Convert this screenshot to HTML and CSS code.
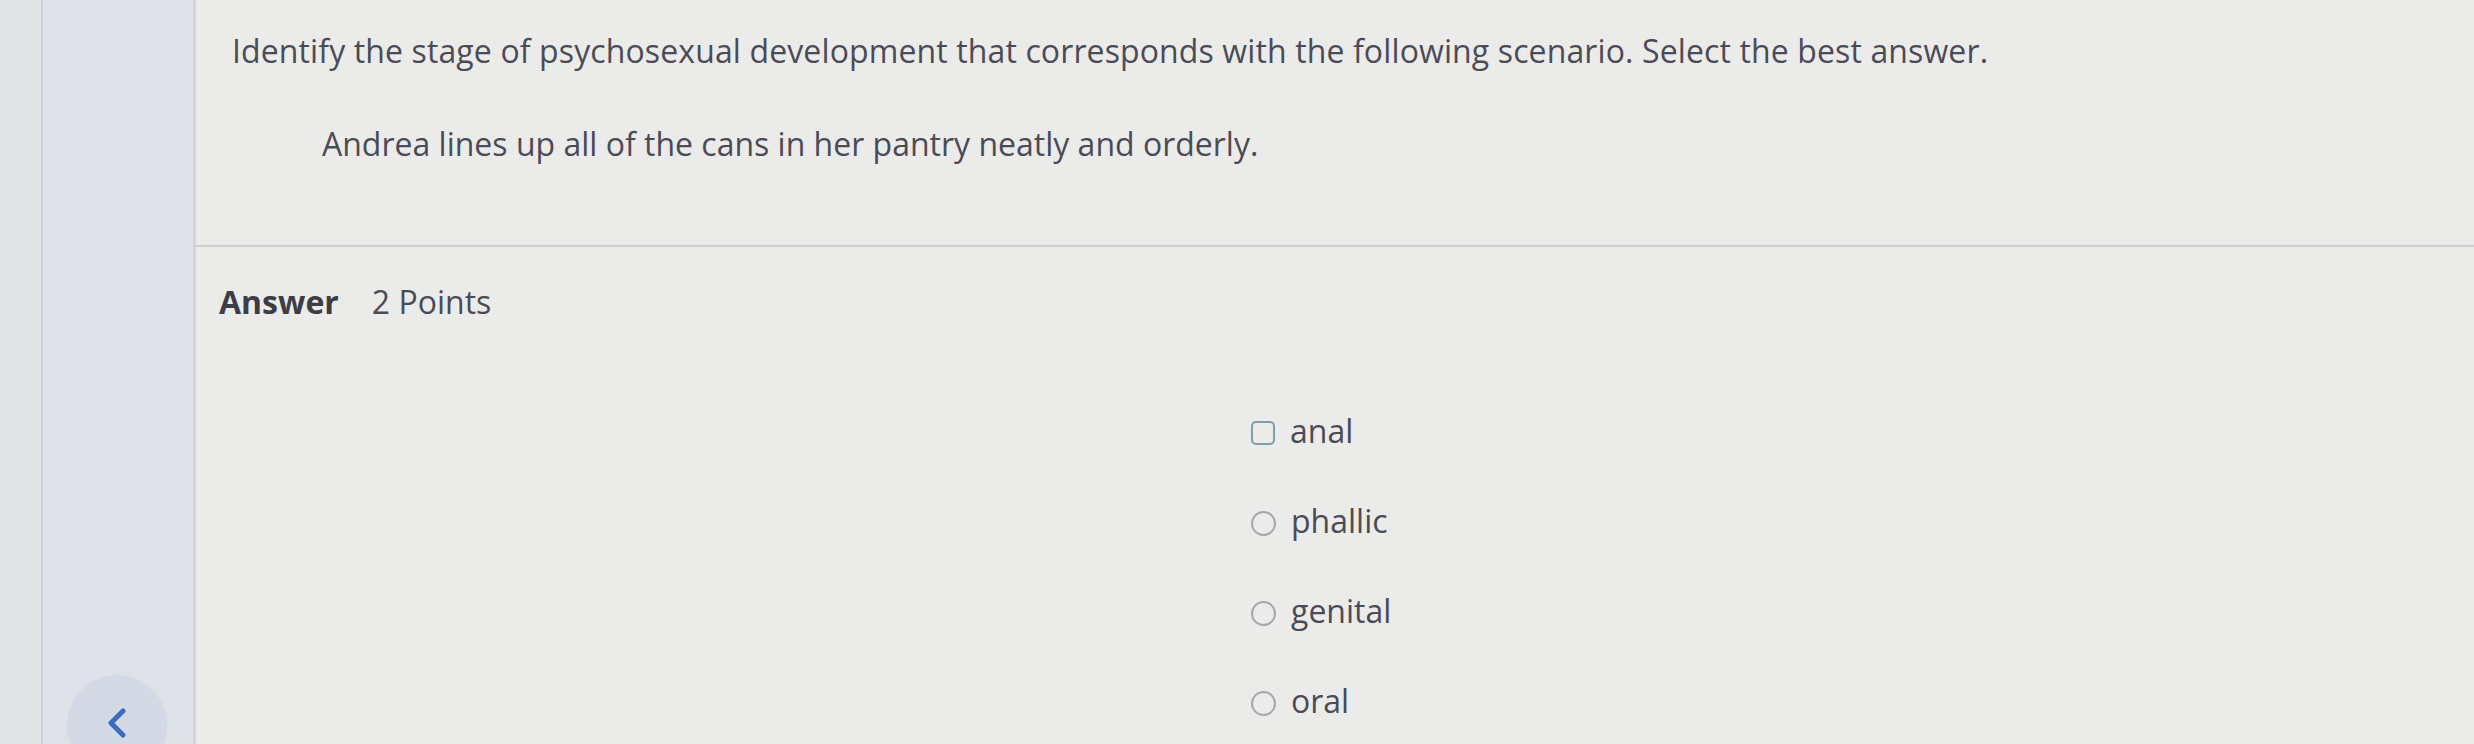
FILE: index.html
```html
<!DOCTYPE html>
<html>
<head>
<meta charset="utf-8">
<link rel="stylesheet" href="styles.css">
</head>
<body>
<div class="edge"></div>
<nav class="sidebar">
  <div class="back">
    <svg width="22" height="30" viewBox="0 0 22 30"><path d="M17 3 L5 15 L17 27" fill="none" stroke="#3b6cc0" stroke-width="5" stroke-linecap="round" stroke-linejoin="round"/></svg>
  </div>
</nav>
<main class="main">
  <section class="question">
    <p class="q-text">Identify the stage of psychosexual development that corresponds with the following scenario. Select the best answer.</p>
    <p class="q-scenario">Andrea lines up all of the cans in her pantry neatly and orderly.</p>
  </section>
  <section class="answer">
    <div class="answer-head"><span class="answer-label">Answer</span><span class="points">2 Points</span></div>
    <ul class="options">
      <li class="option"><span class="box"></span>anal</li>
      <li class="option"><span class="radio"></span>phallic</li>
      <li class="option"><span class="radio"></span>genital</li>
      <li class="option"><span class="radio"></span>oral</li>
    </ul>
  </section>
</main>
</body>
</html>
```

FILE: styles.css
```css
html, body {
  margin: 0;
  padding: 0;
}
body {
  display: flex;
  width: 2474px;
  height: 744px;
  overflow: hidden;
  font-family: "Open Sans", "DejaVu Sans", sans-serif;
  background: #ebebea;
}
.edge {
  width: 41px;
  flex: none;
  background: #e3e4e6;
  border-right: 2px solid #cdd0d4;
}
.sidebar {
  width: 150px;
  flex: none;
  background: #dee1e7;
  border-right: 3px solid #d2d4d7;
  display: flex;
  flex-direction: column;
  justify-content: flex-end;
  align-items: flex-start;
  overflow: hidden;
}
.back {
  width: 100px;
  height: 100px;
  border-radius: 50%;
  background: #d3d9e5;
  margin-left: 24px;
  margin-bottom: -31px;
  display: flex;
  justify-content: center;
  align-items: flex-start;
  padding-top: 33px;
  box-sizing: border-box;
}
.main {
  flex: 1;
  display: flex;
  flex-direction: column;
  color: #4b4b57;
}
.question {
  height: 247px;
  border-bottom: 2px solid #cfcfd0;
  padding-left: 36px;
  padding-top: 31px;
  box-sizing: border-box;
}
.q-text, .q-scenario {
  margin: 0;
  font-size: 32px;
  line-height: 40px;
}
.q-text {
  letter-spacing: 0.12px;
}
.q-scenario {
  margin-top: 53px;
  padding-left: 90px;
}
.answer {
  padding-top: 35px;
  padding-left: 23px;
}
.answer-head {
  display: flex;
  gap: 33px;
  font-size: 32px;
  line-height: 40px;
}
.answer-label {
  font-weight: 700;
  color: #3d3d47;
}
.options {
  list-style: none;
  margin: 89px 0 0 0;
  padding: 0 0 0 1032px;
  display: flex;
  flex-direction: column;
  gap: 50px;
}
.option {
  display: flex;
  align-items: center;
  gap: 15px;
  font-size: 32px;
  line-height: 40px;
}
.box {
  width: 24px;
  height: 24px;
  box-sizing: border-box;
  border: 2.5px solid #7f9dab;
  border-radius: 5px;
  margin-top: 4px;
}
.radio {
  width: 25px;
  height: 25px;
  box-sizing: border-box;
  border: 2px solid #a8a8ab;
  border-radius: 50%;
  margin-top: 4px;
}
```
